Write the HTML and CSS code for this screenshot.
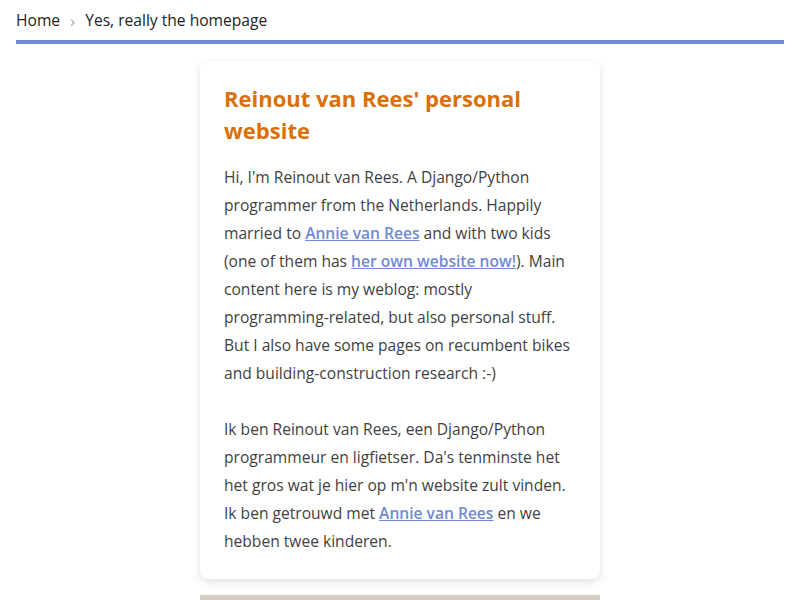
FILE: index.html
```html
<!DOCTYPE html>
<html lang="en">
<head>
    <meta charset="UTF-8">
    <meta name="viewport" content="width=device-width, initial-scale=1">
    <title>Reinout van Rees' personal website</title>
    <link rel="stylesheet" href="styles.css">
</head>
<body>
    <nav class="breadcrumbs">
        <a href="#">Home</a>
        <span class="sep">&rsaquo;</span>
        <span class="current">Yes, really the homepage</span>
    </nav>
    <main class="content">
        <div class="card">
            <h1 class="card-title">Reinout van Rees' personal website</h1>
            <p>Hi, I'm Reinout van Rees. A Django/Python programmer from the Netherlands. Happily married to <a href="#">Annie van Rees</a> and with two kids (one of them has <a href="#">her own website now!</a>). Main content here is my weblog: mostly programming-related, but also personal stuff. But I also have some pages on recumbent bikes and building-construction research :-)</p>
            <p>Ik ben Reinout van Rees, een Django/Python programmeur en ligfietser. Da's tenminste het het gros wat je hier op m'n website zult vinden. Ik ben getrouwd met <a href="#">Annie van Rees</a> en we hebben twee kinderen.</p>
        </div>
        <div class="next-block"></div>
    </main>
</body>
</html>
```

FILE: styles.css
```css
*{
    padding: 0;
    margin: 0;
    box-sizing: border-box;
}
html, body{
    background: #fff;
}
body{
    font-family: "Open Sans", "Noto Sans", sans-serif;
    font-size: 15.6px;
    color: #3f3f3f;
    padding: 0 16px;
    overflow: hidden;
}
a{
    color: #7089d4;
    font-weight: 600;
}

.breadcrumbs{
    display: flex;
    align-items: center;
    gap: 10px;
    height: 40px;
    border-bottom: 4px solid #7089d4;
    box-sizing: content-box;
    color: #222;
    font-size: 15.6px;
}
.breadcrumbs a{
    color: #222;
    font-weight: normal;
    text-decoration: none;
}
.breadcrumbs .sep{
    color: #aaa;
    font-size: 17px;
}

.content{
    width: 400px;
    margin: 18px auto 0;
}
.card{
    background: #fff;
    border-radius: 8px;
    padding: 20px 24px 24px;
    box-shadow: 0 3px 8px rgba(0,0,0,0.12);
}
.card-title{
    color: #d9700a;
    font-size: 22px;
    line-height: 32px;
    font-weight: 700;
    margin-bottom: 17px;
}
.card p{
    line-height: 28px;
    margin-bottom: 28px;
}
.card p:last-child{
    margin-bottom: 0;
}
.next-block{
    margin-top: 16px;
    height: 40px;
    background: #d3cec4;
}
```
